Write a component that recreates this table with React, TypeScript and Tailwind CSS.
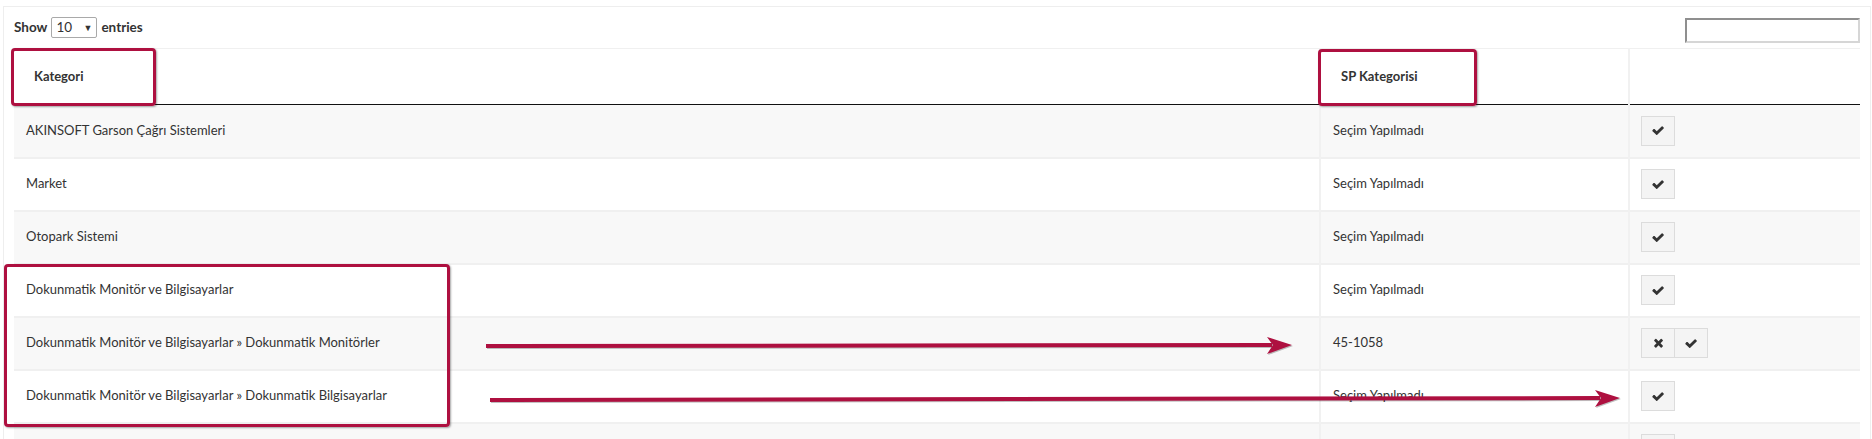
import React from 'react';

interface Row {
  kategori: string;
  sp: string;
  mapped?: boolean;
}

const rows: Row[] = [
  { kategori: 'AKINSOFT Garson Çağrı Sistemleri', sp: 'Seçim Yapılmadı' },
  { kategori: 'Market', sp: 'Seçim Yapılmadı' },
  { kategori: 'Otopark Sistemi', sp: 'Seçim Yapılmadı' },
  { kategori: 'Dokunmatik Monitör ve Bilgisayarlar', sp: 'Seçim Yapılmadı' },
  { kategori: 'Dokunmatik Monitör ve Bilgisayarlar » Dokunmatik Monitörler', sp: '45-1058', mapped: true },
  { kategori: 'Dokunmatik Monitör ve Bilgisayarlar » Dokunmatik Bilgisayarlar', sp: 'Seçim Yapılmadı' },
  { kategori: '', sp: '' },
];

const CheckIcon = () => (
  <svg viewBox="80 330 1610 1160" className="w-[12px] h-[9px]" fill="#333">
    <path d="M1671 566q0 40-28 68l-724 724-136 136q-28 28-68 28t-68-28l-136-136-362-362q-28-28-28-68t28-68l136-136q28-28 68-28t68 28l294 295 656-657q28-28 68-28t68 28l136 136q28 28 28 68z" />
  </svg>
);

const TimesIcon = () => (
  <svg viewBox="150 280 1350 1290" className="w-[10px] h-[10px]" fill="#333">
    <path d="M1490 1322q0 40-28 68l-136 136q-28 28-68 28t-68-28l-294-294-294 294q-28 28-68 28t-68-28l-136-136q-28-28-28-68t28-68l294-294-294-294q-28-28-28-68t28-68l136-136q28-28 68-28t68 28l294 294 294-294q28-28 68-28t68 28l136 136q28 28 28 68t-28 68l-294 294 294 294q28 28 28 68z" />
  </svg>
);

const IconButton: React.FC<{ children: React.ReactNode; first?: boolean }> = ({ children, first }) => (
  <button
    className={`flex items-center justify-center w-[34px] h-[30px] bg-[#f4f4f4] border border-[#dcdcdc] ${
      first ? '' : '-ml-px'
    }`}
  >
    {children}
  </button>
);

export default function App() {
  return (
    <div className="relative w-[1872px] h-[439px] overflow-hidden bg-white font-['Lato','Liberation_Sans',sans-serif] text-[13px] text-[#333]">
      <div className="mt-[6px] ml-[3px] mr-[1px] border border-[#eeeeee] px-[10px] pt-[10px]">
        {/* length + search */}
        <div className="flex items-start justify-between h-[31px]">
          <div className="flex items-center gap-[4px] font-bold text-[13.5px]">
            <span>Show</span>
            <div className="flex items-center justify-between w-[46px] h-[21px] border border-[#a9a9a9] rounded-[2px] px-[4px] font-normal bg-white">
              <span>10</span>
              <span className="text-[9px]">▼</span>
            </div>
            <span>entries</span>
          </div>
          <input className="mt-[1px] w-[175px] h-[25px] border-2 border-[#d6d6d6] border-t-[#8f8f8f] border-l-[#8f8f8f]" />
        </div>

        <table className="w-full table-fixed border-collapse">
          <colgroup>
            <col className="w-[1306px]" />
            <col className="w-[309px]" />
            <col />
          </colgroup>
          <thead>
            <tr className="h-[56px] border-t border-[#f0f0f0] border-b border-b-[#111]">
              <th className="text-left font-bold pl-[20px]">Kategori</th>
              <th className="text-left font-bold pl-[20px] border-l-2 border-[#f1f1f1]">SP Kategorisi</th>
              <th className="border-l-2 border-[#f1f1f1]"></th>
            </tr>
          </thead>
          <tbody>
            {rows.map((r, i) => (
              <tr key={i} className={`h-[53px] border-b-2 border-[#f0f0f0] ${i % 2 === 0 ? 'bg-[#f8f8f8]' : 'bg-white'}`}>
                <td className="pl-[12px]">{r.kategori}</td>
                <td className="pl-[12px] border-l-2 border-[#f1f1f1]">{r.sp}</td>
                <td className="pl-[11px] border-l-2 border-[#f1f1f1]">
                  <div className="flex">
                    {r.mapped && (
                      <IconButton first>
                        <TimesIcon />
                      </IconButton>
                    )}
                    <IconButton first={!r.mapped}>
                      <CheckIcon />
                    </IconButton>
                  </div>
                </td>
              </tr>
            ))}
          </tbody>
        </table>
      </div>

      {/* annotation boxes */}
      <div className="absolute left-[11px] top-[48px] w-[145px] h-[58px] border-[3px] border-[#ae1040] rounded-[4px] shadow-[1px_1px_2px_rgba(0,0,0,0.35)]" />
      <div className="absolute left-[1318px] top-[49px] w-[159px] h-[57px] border-[3px] border-[#ae1040] rounded-[4px] shadow-[1px_1px_2px_rgba(0,0,0,0.35)]" />
      <div className="absolute left-[4px] top-[264px] w-[446px] h-[163px] border-[3px] border-[#ae1040] rounded-[4px] shadow-[1px_1px_2px_rgba(0,0,0,0.35)]" />

      {/* arrows */}
      <svg
        className="absolute left-0 top-0 pointer-events-none drop-shadow-[1px_1px_0_rgba(0,0,0,0.25)]"
        width="1872"
        height="439"
        viewBox="0 0 1872 439"
      >
        <line x1="486" y1="346" x2="1272" y2="345" stroke="#ae1040" strokeWidth="4" />
        <polygon points="1267,337 1292,345 1267,354 1273,345" fill="#ae1040" />
        <line x1="490" y1="400" x2="1600" y2="398" stroke="#ae1040" strokeWidth="4" />
        <polygon points="1595,390 1620,398 1595,407 1601,398" fill="#ae1040" />
      </svg>
    </div>
  );
}
